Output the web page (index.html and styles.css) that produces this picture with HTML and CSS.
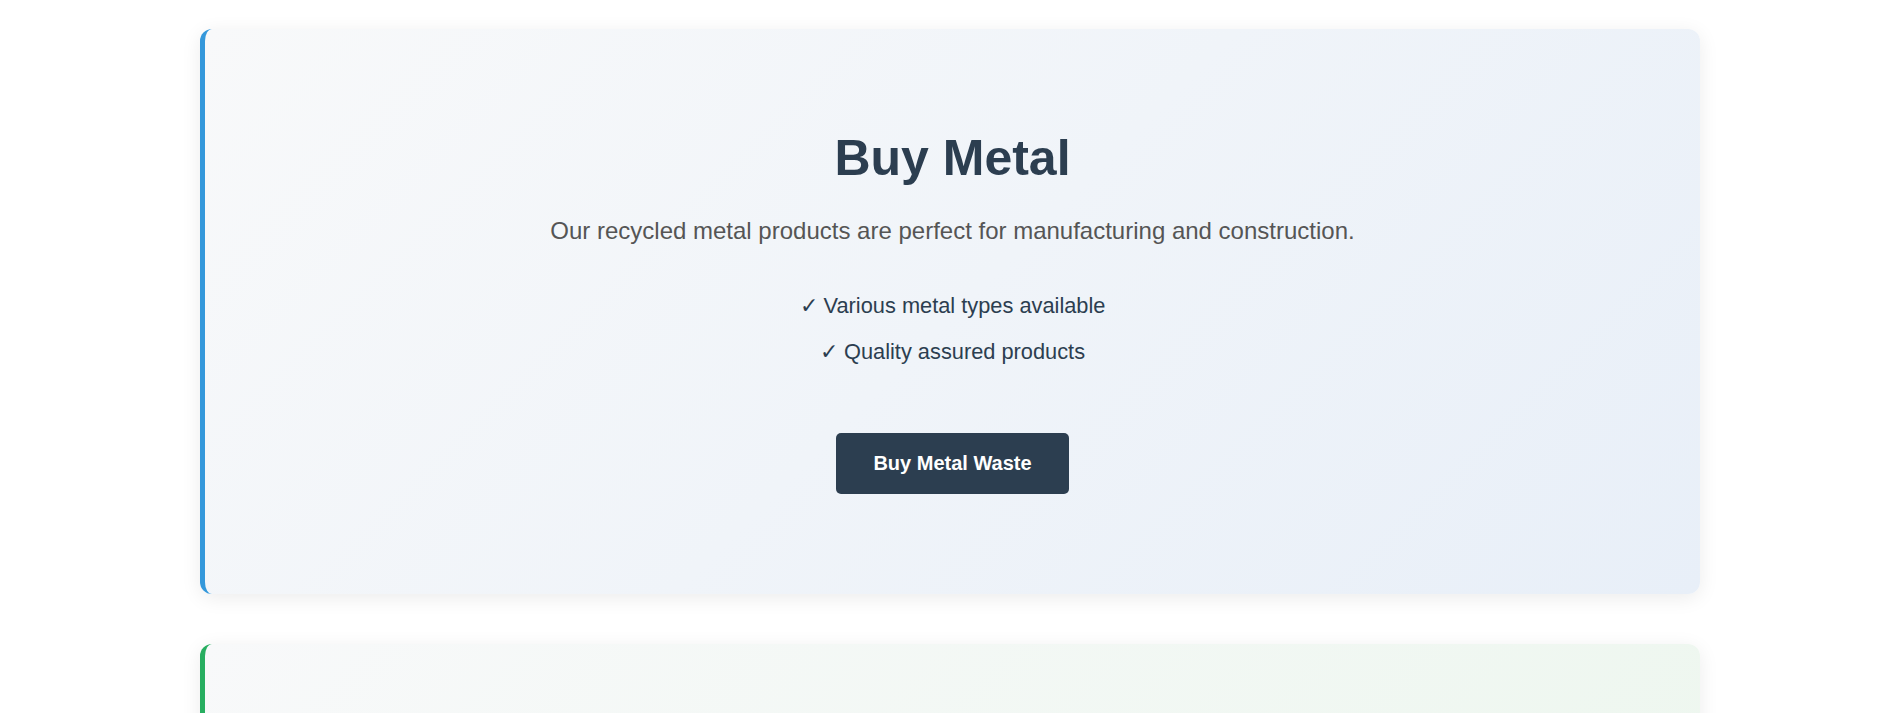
FILE: index.html
```html
<!DOCTYPE html>
<html lang="en">
<head>
<meta charset="utf-8">
<title>Buy Recycled Materials</title>
<link rel="stylesheet" href="styles.css">
</head>
<body>
<main class="page">
  <section class="card card-metal">
    <h2 class="card-title">Buy Metal</h2>
    <p class="card-desc">Our recycled metal products are perfect for manufacturing and construction.</p>
    <ul class="card-list">
      <li>✓ Various metal types available</li>
      <li>✓ Quality assured products</li>
    </ul>
    <button class="card-btn" type="button">Buy Metal Waste</button>
  </section>
  <section class="card card-plastic">
    <h2 class="card-title">Buy Plastic</h2>
    <p class="card-desc">Our recycled plastic products are ideal for packaging and everyday goods.</p>
    <ul class="card-list">
      <li>✓ Sorted by plastic grade</li>
      <li>✓ Clean and processed materials</li>
    </ul>
    <button class="card-btn" type="button">Buy Plastic Waste</button>
  </section>
</main>
</body>
</html>
```

FILE: styles.css
```css
* { box-sizing: border-box; }

body {
  margin: 0;
  background: #ffffff;
  font-family: "Liberation Sans", Arial, sans-serif;
}

.page {
  width: 1500px;
  margin-left: 200px;
  padding-top: 29px;
  display: flex;
  flex-direction: column;
  gap: 50px;
}

.card {
  border-radius: 12px;
  border-left: 5px solid #3498db;
  padding: 100px 2rem 100px;
  text-align: center;
  box-shadow: 0 4px 20px rgba(0, 0, 0, 0.08);
  background: linear-gradient(135deg, #f8f9fa 0%, #e8eff8 100%);
}

.card-plastic {
  border-left-color: #27ae60;
  background: linear-gradient(135deg, #f8f9fa 0%, #ebf6ec 100%);
}

.card-title {
  margin: 0 0 26px;
  font-size: 50px;
  line-height: 58px;
  font-weight: 700;
  color: #2c3e50;
}

.card-desc {
  margin: 0 0 34px;
  font-size: 24px;
  line-height: 36px;
  color: #555555;
}

.card-list {
  list-style: none;
  margin: 0 0 58px;
  padding: 0;
  font-size: 21.8px;
  line-height: 30px;
  color: #2c3e50;
}

.card-list li {
  padding: 8px 0;
}

.card-btn {
  font-family: inherit;
  font-size: 20px;
  line-height: 29px;
  font-weight: 700;
  color: #ffffff;
  background: #2c3e50;
  border: none;
  border-radius: 5px;
  padding: 16px 37px;
  cursor: pointer;
}
```
